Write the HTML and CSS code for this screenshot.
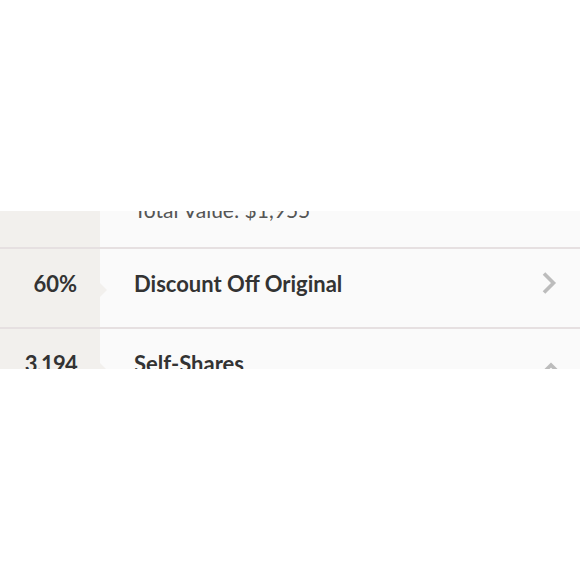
FILE: index.html
```html
<!DOCTYPE html>
<html>
<head>
<meta charset="utf-8">
<link rel="stylesheet" href="styles.css">
</head>
<body>
<div class="viewport">
  <div class="list">
    <div class="row row-first">
      <div class="stat"></div>
      <div class="info">
        <div class="title">Total Shares</div>
        <div class="sub">Total Value: $1,955</div>
      </div>
    </div>
    <div class="row">
      <div class="stat"><span class="num">60%</span><span class="notch"></span></div>
      <div class="info">
        <div class="title">Discount Off Original</div>
        <svg class="chev" width="18" height="24" viewBox="0 0 18 24"><polyline points="4,2.5 13.5,12 4,21.5" fill="none" stroke="#bcbcbc" stroke-width="3.6"/></svg>
      </div>
    </div>
    <div class="row">
      <div class="stat"><span class="num num-tight">3,194</span><span class="notch"></span></div>
      <div class="info">
        <div class="title">Self-Shares</div>
        <svg class="chev chev-up" width="18" height="24" viewBox="0 0 18 24"><polyline points="0,23 9,14 18,23" fill="none" stroke="#bcbcbc" stroke-width="3.6"/></svg>
      </div>
    </div>
  </div>
</div>
</body>
</html>
```
FILE: styles.css
```css
html, body {
  margin: 0;
  background: #ffffff;
}
.viewport {
  margin-top: 211px;
  height: 158px;
  overflow: hidden;
  font-family: "Lato", "Liberation Sans", sans-serif;
}
.list {
  margin-top: -42px;
}
.row {
  display: flex;
  height: 78px;
  border-bottom: 2px solid #e6e0e1;
}
.stat {
  position: relative;
  width: 100px;
  flex: none;
  background: #f2f0ed;
  display: flex;
  align-items: center;
  justify-content: flex-end;
  padding: 0 23px 10px 0;
  box-sizing: border-box;
}
.num {
  font-size: 22px;
  font-weight: 700;
  color: #333333;
}
.num-tight {
  letter-spacing: -0.8px;
}
.notch {
  position: absolute;
  right: -7px;
  top: 34px;
  width: 0;
  height: 0;
  border-top: 7px solid transparent;
  border-bottom: 7px solid transparent;
  border-left: 7px solid #f2f0ed;
  z-index: 1;
}
.info {
  flex: 1;
  background: #fafafa;
  display: flex;
  align-items: center;
  justify-content: space-between;
  padding: 0 22px 10px 34px;
}
.row-first .info {
  flex-direction: column;
  align-items: flex-start;
  justify-content: flex-start;
  padding: 2px 22px 0 34px;
}
.title {
  font-size: 22px;
  font-weight: 700;
  color: #333333;
}
.sub {
  font-size: 21px;
  color: #555555;
  line-height: 26px;
}
.row-first .title {
  line-height: 26px;
}
.chev {
  display: block;
}
.chev-up {
  margin-right: -2px;
}
```
